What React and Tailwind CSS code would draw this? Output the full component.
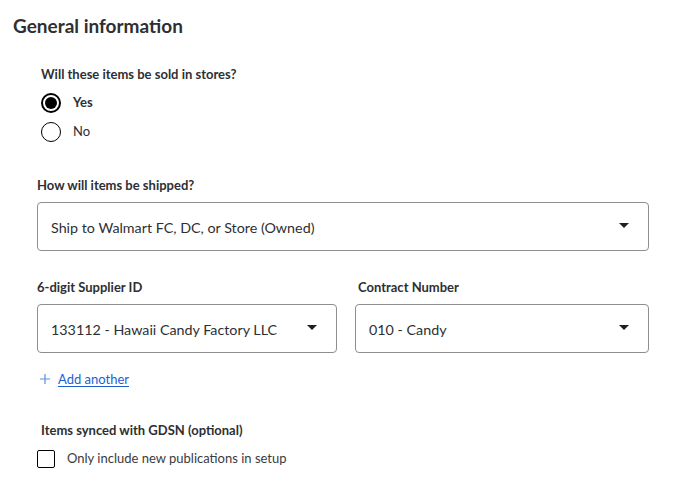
const font = { fontFamily: '"Lato", "Open Sans", sans-serif' };

function Caret() {
  return (
    <svg width="10" height="5" viewBox="0 0 10 5" className="mb-[3px] shrink-0 text-[#1f1f22]">
      <path d="M0 0h10L5 5z" fill="currentColor" />
    </svg>
  );
}

function SelectBox({ value, className = "" }) {
  return (
    <div
      className={
        "flex h-[49px] items-center justify-between rounded-[4px] border border-[#8d8e92] bg-white pl-[13px] pr-[19px] " +
        className
      }
    >
      <span className="pt-[3px] text-[14.3px] text-[#2e2f32]">{value}</span>
      <Caret />
    </div>
  );
}

function Radio({ checked, label }) {
  return (
    <label className="flex h-[29px] items-center gap-[12px]">
      <span
        className={
          "flex h-[20px] w-[20px] items-center justify-center rounded-full border-black " +
          (checked ? "border-2" : "border")
        }
      >
        {checked && <span className="h-[12px] w-[12px] rounded-full bg-black" />}
      </span>
      <span
        className={
          "text-[13px] text-[#2e2f32] " + (checked ? "font-bold" : "font-normal")
        }
      >
        {label}
      </span>
    </label>
  );
}

export default function App() {
  return (
    <div className="min-h-[503px] w-[673px] bg-white" style={font}>
      <div className="px-[13px] pt-[14px]">
        <h2 className="text-[19px] font-bold leading-[24px] text-[#2e2f32]">
          General information
        </h2>
      </div>

      <div className="pl-[37px] pr-[24px]">
        <section className="pl-[4px] pt-[27px]">
          <p className="text-[13px] font-bold leading-[18px] text-[#2e2f32]">
            Will these items be sold in stores?
          </p>
          <div className="mt-[5px] flex flex-col">
            <Radio checked label="Yes" />
            <Radio label="No" />
          </div>
        </section>

        <section className="pt-[30px]">
          <p className="text-[13px] font-bold leading-[18px] text-[#2e2f32]">
            How will items be shipped?
          </p>
          <SelectBox className="mt-[8px]" value="Ship to Walmart FC, DC, or Store (Owned)" />
        </section>

        <section className="grid grid-cols-[300px_1fr] gap-[18px] pt-[27px]">
          <div>
            <p className="text-[13px] font-bold leading-[18px] text-[#2e2f32]">
              6-digit Supplier ID
            </p>
            <SelectBox className="mt-[8px]" value="133112 - Hawaii Candy Factory LLC" />
          </div>
          <div>
            <p className="pl-[3px] text-[13px] font-bold leading-[18px] text-[#2e2f32]">
              Contract Number
            </p>
            <SelectBox className="mt-[8px]" value="010 - Candy" />
          </div>
        </section>

        <button className="mt-[17px] flex items-center gap-[8px] pl-[3px] text-[13px] leading-[18px]">
          <svg width="10" height="10" viewBox="0 0 10 10" className="text-[#5b8fe0]">
            <path d="M5 0v10M0 5h10" stroke="currentColor" strokeWidth="1.2" />
          </svg>
          <span className="text-[#1b5fd1] underline underline-offset-2">Add another</span>
        </button>

        <section className="pl-[4px] pt-[33px]">
          <p className="text-[13px] font-bold leading-[18px] text-[#2e2f32]">
            Items synced with GDSN (optional)
          </p>
        </section>
        <label className="mt-[10px] flex items-center gap-[12px]">
          <span className="h-[18px] w-[18px] rounded-[2px] border border-black" />
          <span className="text-[13px] text-[#3a3b3e]">Only include new publications in setup</span>
        </label>
      </div>
    </div>
  );
}
